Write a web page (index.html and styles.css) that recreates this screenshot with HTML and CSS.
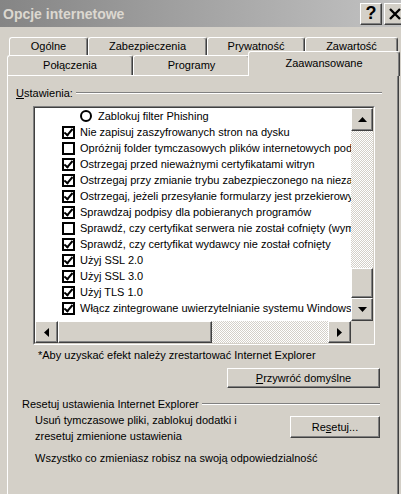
FILE: index.html
```html
<!DOCTYPE html>
<html lang="pl">
<head>
    <meta charset="UTF-8">
    <title>Opcje internetowe</title>
    <link rel="stylesheet" href="styles.css">
</head>
<body>

<div class="titlebar">
    <span class="title">Opcje internetowe</span>
    <div class="caption-buttons">
        <span class="caption-btn">?</span>
        <span class="caption-btn">
            <svg width="12" height="12" viewBox="0 0 12 12"><path d="M1 1 L11 11 M11 1 L1 11" stroke="#000" stroke-width="2.4"/></svg>
        </span>
    </div>
</div>

<div class="tabs">
    <div class="tab-row back">
        <div class="tab">Ogólne</div>
        <div class="tab">Zabezpieczenia</div>
        <div class="tab">Prywatność</div>
        <div class="tab">Zawartość</div>
    </div>
    <div class="tab-row front">
        <div class="tab">Połączenia</div>
        <div class="tab">Programy</div>
        <div class="tab active">Zaawansowane</div>
    </div>
</div>

<div class="panel">
    <div class="section">
        <span><u>U</u>stawienia:</span>
        <span class="etch"></span>
    </div>

    <div class="listbox">
        <div class="listbox-frame">
            <div class="list-area">
                <ul class="options">
                    <li class="option sub"><span class="radio"></span><span>Zablokuj filter Phishing</span></li>
                    <li class="option"><span class="check on"></span><span>Nie zapisuj zaszyfrowanych stron na dysku</span></li>
                    <li class="option"><span class="check"></span><span>Opróżnij folder tymczasowych plików internetowych podczas zamykania przeglądarki</span></li>
                    <li class="option"><span class="check on"></span><span>Ostrzegaj przed nieważnymi certyfikatami witryn</span></li>
                    <li class="option"><span class="check on"></span><span>Ostrzegaj przy zmianie trybu zabezpieczonego na niezabezpieczony</span></li>
                    <li class="option"><span class="check on"></span><span>Ostrzegaj, jeżeli przesyłanie formularzy jest przekierowywane</span></li>
                    <li class="option"><span class="check on"></span><span>Sprawdzaj podpisy dla pobieranych programów</span></li>
                    <li class="option"><span class="check"></span><span>Sprawdź, czy certyfikat serwera nie został cofnięty (wymaga ponownego uruchomienia)</span></li>
                    <li class="option"><span class="check on"></span><span>Sprawdź, czy certyfikat wydawcy nie został cofnięty</span></li>
                    <li class="option"><span class="check on"></span><span>Użyj SSL 2.0</span></li>
                    <li class="option"><span class="check on"></span><span>Użyj SSL 3.0</span></li>
                    <li class="option"><span class="check on"></span><span>Użyj TLS 1.0</span></li>
                    <li class="option"><span class="check on"></span><span>Włącz zintegrowane uwierzytelnianie systemu Windows*</span></li>
                </ul>
                <div class="vscroll">
                    <span class="sb-btn"><svg width="9" height="5" viewBox="0 0 9 5"><polygon points="0,5 9,5 4.5,0" fill="#000"/></svg></span>
                    <span class="sb-track"></span>
                    <span class="sb-thumb v"></span>
                    <span class="sb-btn"><svg width="9" height="5" viewBox="0 0 9 5"><polygon points="0,0 9,0 4.5,5" fill="#000"/></svg></span>
                </div>
            </div>
            <div class="hscroll">
                <span class="sb-btn"><svg width="5" height="9" viewBox="0 0 5 9"><polygon points="5,0 5,9 0,4.5" fill="#000"/></svg></span>
                <span class="sb-thumb h"></span>
                <span class="sb-track"></span>
                <span class="sb-btn"><svg width="5" height="9" viewBox="0 0 5 9"><polygon points="0,0 0,9 5,4.5" fill="#000"/></svg></span>
                <span class="sb-corner"></span>
            </div>
        </div>
    </div>

    <p class="note">*Aby uzyskać efekt należy zrestartować Internet Explorer</p>

    <div class="actions">
        <button class="btn restore"><u>P</u>rzywróć domyślne</button>
    </div>

    <div class="section reset">
        <span>Resetuj ustawienia Internet Explorer</span>
        <span class="etch"></span>
    </div>

    <div class="reset-row">
        <p>Usuń tymczasowe pliki, zablokuj dodatki i<br>zresetuj zmienione ustawienia</p>
        <button class="btn reset-btn">Re<u>s</u>etuj...</button>
    </div>

    <p class="warning">Wszystko co zmieniasz robisz na swoją odpowiedzialność</p>
</div>

</body>
</html>
```

FILE: styles.css
```css
* {
    box-sizing: border-box;
}
body {
    margin: 0;
    width: 401px;
    height: 494px;
    overflow: hidden;
    background-color: #d4d0c8;
    color: #000;
    font-family: Tahoma, 'Liberation Sans', Arial, sans-serif;
    font-size: 11px;
}
p {
    margin: 0;
}

/* title bar */
.titlebar {
    display: flex;
    align-items: center;
    height: 27px;
    padding-left: 3px;
    background: linear-gradient(to right, #858585, #c2c2c2);
}
.title {
    flex: 1;
    font-size: 14px;
    font-weight: bold;
    color: #dcd8d0;
}
.caption-buttons {
    display: flex;
    gap: 2px;
    margin-right: -5px;
}
.caption-btn {
    display: flex;
    align-items: center;
    justify-content: center;
    width: 22px;
    height: 22px;
    background-color: #d4d0c8;
    border: 1px solid;
    border-color: #fff #404040 #404040 #fff;
    box-shadow: inset -1px -1px #808080;
    font-size: 18px;
    font-weight: bold;
}

/* tabs */
.tabs {
    margin-top: 10px;
}
.tab-row {
    display: grid;
}
.tab-row.back {
    grid-template-columns: 79px 119px 98px 93px;
    height: 18px;
    padding-left: 9px;
}
.tab-row.front {
    grid-template-columns: 126px 117px 150px;
    height: 20px;
    padding-left: 7px;
}
.tab {
    background-color: #d4d0c8;
    border: 1px solid;
    border-color: #fff #404040 transparent #fff;
    border-bottom: none;
    border-radius: 3px 3px 0 0;
    box-shadow: inset -1px 0 #808080;
    text-align: center;
    line-height: 17px;
}
.tab-row.front .tab {
    line-height: 18px;
}
.tab-row.front .tab.active {
    position: relative;
    z-index: 1;
    margin: -4px 0 -1px -2px;
    padding-top: 3px;
    line-height: 16px;
}

/* panel */
.panel {
    width: 392px;
    height: 440px;
    margin-left: 7px;
    border: 1px solid;
    border-color: #fff #404040 #404040 #fff;
    box-shadow: inset -1px 0 #808080;
}
.section {
    display: flex;
    align-items: center;
    height: 14px;
    margin: 10px 16px 0 8px;
}
.etch {
    flex: 1;
    height: 2px;
    margin-left: 3px;
    border-top: 1px solid #808080;
    border-bottom: 1px solid #fff;
}
.section.reset {
    margin: 9px 18px 0 14px;
}

/* list box */
.listbox {
    width: 342px;
    margin: 6px 0 0 25px;
    border: 1px solid;
    border-color: #808080 #fff #fff #808080;
}
.listbox-frame {
    border: 1px solid;
    border-color: #404040 #d4d0c8 #d4d0c8 #404040;
}
.list-area {
    display: flex;
    height: 213px;
}
.options {
    flex: 1;
    margin: 0;
    padding: 0;
    list-style: none;
    background-color: #fff;
    overflow: hidden;
}
.option {
    display: flex;
    align-items: center;
    height: 16px;
    padding-left: 27px;
    white-space: nowrap;
}
.option.sub {
    padding-left: 45px;
}
.check {
    flex: none;
    display: flex;
    align-items: center;
    justify-content: center;
    width: 13px;
    height: 13px;
    margin-right: 5px;
    border: 2px solid #000;
    background-color: #fff;
}
.check.on::after {
    content: "";
    width: 3px;
    height: 7px;
    margin-top: -2px;
    border: solid #000;
    border-width: 0 2.5px 2.5px 0;
    transform: rotate(40deg);
}
.radio {
    flex: none;
    width: 12px;
    height: 12px;
    margin-right: 6px;
    border: 2px solid #000;
    border-radius: 50%;
    background-color: #fff;
}

/* scroll bars */
.vscroll {
    display: flex;
    flex-direction: column;
    width: 22px;
    background: repeating-conic-gradient(#fff 0 25%, #d4d0c8 0 50%) 0 0 / 2px 2px;
}
.hscroll {
    display: flex;
    height: 22px;
    background: repeating-conic-gradient(#fff 0 25%, #d4d0c8 0 50%) 0 0 / 2px 2px;
}
.sb-btn {
    flex: none;
    display: flex;
    align-items: center;
    justify-content: center;
    width: 22px;
    height: 23px;
    background-color: #d4d0c8;
    border: 1px solid;
    border-color: #fff #404040 #404040 #fff;
    box-shadow: inset -1px -1px #808080;
}
.hscroll .sb-btn {
    width: 23px;
    height: 22px;
}
.sb-track {
    flex: 1;
}
.sb-thumb {
    flex: none;
    background-color: #d4d0c8;
    border: 1px solid;
    border-color: #fff #404040 #404040 #fff;
    box-shadow: inset -1px -1px #808080;
}
.sb-thumb.v {
    height: 30px;
}
.sb-thumb.h {
    width: 154px;
}
.sb-corner {
    flex: none;
    width: 22px;
    background-color: #d4d0c8;
}

/* bottom part */
.note {
    margin: 4px 0 0 30px;
    line-height: 13px;
}
.actions {
    display: flex;
    justify-content: flex-end;
    margin: 6px 18px 0 0;
}
.btn {
    height: 20px;
    padding: 0;
    font: inherit;
    color: #000;
    background-color: #d4d0c8;
    border: 1px solid;
    border-color: #fff #404040 #404040 #fff;
    box-shadow: inset -1px -1px #808080;
}
.restore {
    width: 153px;
}
.reset-row {
    display: flex;
    justify-content: space-between;
    align-items: flex-start;
    margin: 1px 18px 0 27px;
    line-height: 16px;
}
.reset-btn {
    width: 90px;
    height: 22px;
    margin-top: 4px;
}
.warning {
    margin: 6px 0 0 27px;
    line-height: 16px;
}
```
